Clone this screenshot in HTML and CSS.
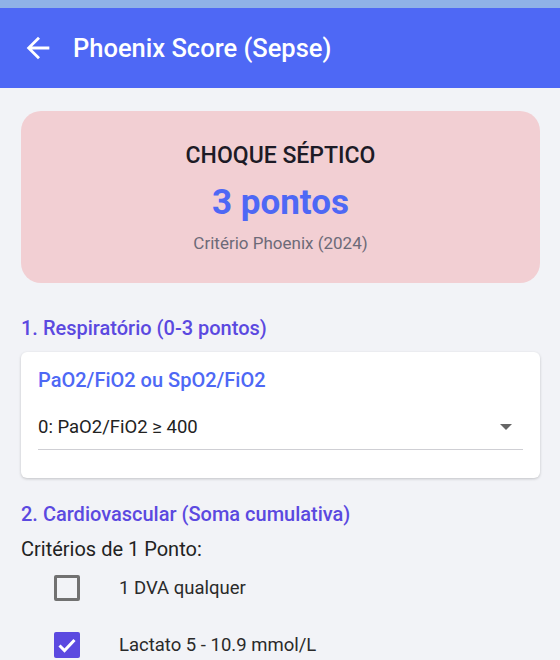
FILE: index.html
```html
<!DOCTYPE html>
<html lang="pt">

<head>
  <meta charset="UTF-8">
  <meta name="viewport" content="width=device-width, initial-scale=1.0">
  <title>Phoenix Score</title>
  <link rel="stylesheet" href="styles.css">
</head>

<body>
  <div class="status-bar"></div>
  <header class="app-bar">
    <svg class="back-icon" viewBox="0 0 24 24">
      <path d="M20 11H7.83l5.59-5.59L12 4l-8 8 8 8 1.41-1.41L7.83 13H20v-2z" />
    </svg>
    <h1 class="app-title">Phoenix Score (Sepse)</h1>
  </header>

  <main class="content">
    <div class="result-card">
      <div class="result-label">CHOQUE SÉPTICO</div>
      <div class="result-score">3 pontos</div>
      <div class="result-note">Critério Phoenix (2024)</div>
    </div>

    <h2 class="section-title">1. Respiratório (0-3 pontos)</h2>
    <div class="field-card">
      <div class="field-label">PaO2/FiO2 ou SpO2/FiO2</div>
      <div class="select">
        <span>0: PaO2/FiO2 ≥ 400</span>
        <span class="select-arrow"></span>
      </div>
    </div>

    <h2 class="section-title cardio">2. Cardiovascular (Soma cumulativa)</h2>
    <div class="sub-title">Critérios de 1 Ponto:</div>
    <label class="check-row">
      <span class="checkbox"></span>
      <span class="check-text">1 DVA qualquer</span>
    </label>
    <label class="check-row">
      <span class="checkbox checked">
        <svg viewBox="0 0 26 26"><polyline points="5.5,13.5 10.5,18.5 20.5,8" /></svg>
      </span>
      <span class="check-text">Lactato 5 - 10.9 mmol/L</span>
    </label>
  </main>
</body>

</html>
```

FILE: styles.css
```css
body {
  margin: 0;
  background-color: #f2f3f7;
  font-family: Roboto, "Noto Sans", sans-serif;
  color: #212121;
  overflow: hidden;
}

.status-bar {
  height: 8px;
  background-color: #8fb2e7;
}

.app-bar {
  height: 80px;
  background-color: #4e68f5;
  display: flex;
  align-items: center;
  padding-left: 21px;
  color: white;
}

.back-icon {
  width: 34px;
  height: 34px;
  fill: white;
}

.app-title {
  margin: 0 0 0 18px;
  font-size: 25.5px;
  font-weight: 500;
}

.content {
  padding: 23px 20px 0 21px;
}

.result-card {
  background-color: #f2cfd3;
  border-radius: 20px;
  height: 172px;
  box-sizing: border-box;
  padding-top: 32px;
  text-align: center;
}

.result-label {
  font-size: 23px;
  line-height: 26px;
  font-weight: 500;
  color: #1d1b26;
}

.result-score {
  margin-top: 15px;
  font-size: 35px;
  line-height: 38px;
  font-weight: 700;
  color: #4e68f5;
}

.result-note {
  margin-top: 11px;
  font-size: 17px;
  line-height: 20px;
  color: #6d6a78;
}

.section-title {
  margin: 33px 0 0 0;
  font-size: 20px;
  line-height: 24px;
  font-weight: 500;
  color: #5b49e0;
}

.field-card {
  margin-top: 12px;
  background-color: white;
  border-radius: 6px;
  box-shadow: 0 1px 3px rgba(0, 0, 0, 0.2);
  height: 126px;
  box-sizing: border-box;
  padding: 16px 17px 0 17px;
}

.field-label {
  font-size: 20px;
  line-height: 24px;
  font-weight: 500;
  color: #4e68f5;
}

.select {
  margin-top: 21px;
  display: flex;
  justify-content: space-between;
  align-items: center;
  height: 28px;
  padding-bottom: 8px;
  border-bottom: 1px solid #cfcfd4;
  font-size: 18.5px;
  color: #222;
}

.select-arrow {
  width: 0;
  height: 0;
  margin-right: 11px;
  border-left: 6px solid transparent;
  border-right: 6px solid transparent;
  border-top: 6px solid #666;
}

.section-title.cardio {
  margin-top: 24px;
}

.sub-title {
  margin-top: 11px;
  font-size: 20px;
  line-height: 24px;
  color: #222;
}

.check-row {
  display: flex;
  align-items: center;
  height: 57px;
  margin-left: 33px;
}

.check-row:first-of-type {
  margin-top: -2px;
}

.checkbox {
  width: 26px;
  height: 26px;
  box-sizing: border-box;
  border: 3px solid #717171;
  border-radius: 2px;
  display: flex;
  align-items: center;
  justify-content: center;
}

.checkbox.checked {
  background-color: #5b49e0;
  border: none;
}

.checkbox svg {
  width: 26px;
  height: 26px;
  fill: none;
  stroke: white;
  stroke-width: 3;
}

.check-text {
  margin-left: 39px;
  font-size: 18.5px;
  color: #2a2a2a;
}
```
